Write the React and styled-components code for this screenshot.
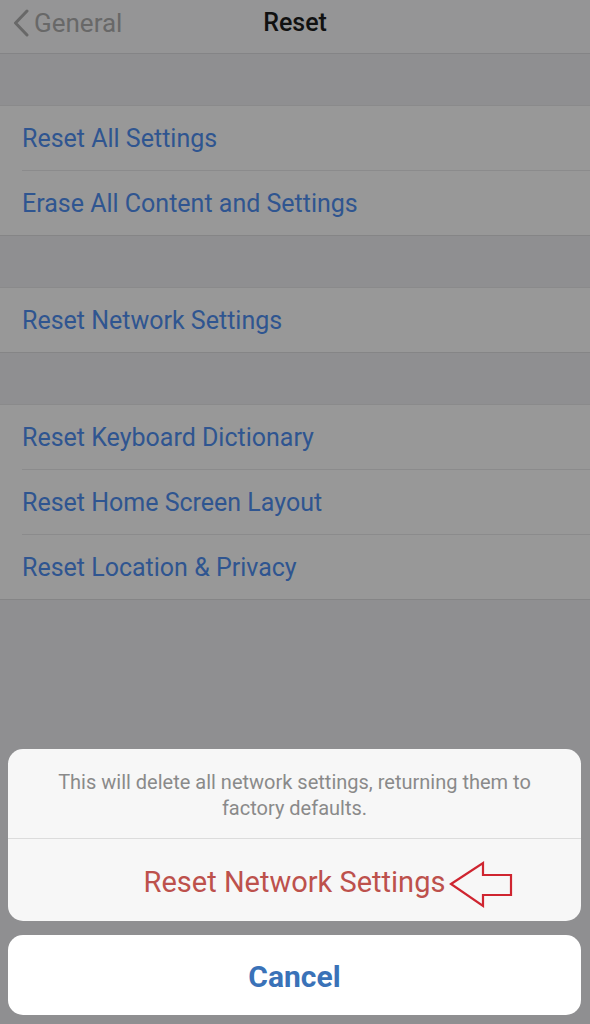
import React from "react";
import styled, { createGlobalStyle } from "styled-components";

const Global = createGlobalStyle`
  html, body { margin: 0; padding: 0; background: #8f8f91; }
  body { font-family: Roboto, "Liberation Sans", Arial, sans-serif; -webkit-font-smoothing: antialiased; }
`;

const Screen = styled.div`
  width: 590px;
  height: 1024px;
  display: flex;
  flex-direction: column;
  background: #8f8f91;
  overflow: hidden;
`;

const NavBar = styled.div`
  height: 53px;
  border-bottom: 1px solid #848486;
  background: #959596;
  display: grid;
  grid-template-columns: 1fr auto 1fr;
  align-items: center;
`;

const Back = styled.div`
  display: flex;
  align-items: center;
  gap: 3px;
  padding-left: 11px;
  color: #686868;
  font-size: 26px;
  margin-top: -8px;
`;

const Title = styled.div`
  font-size: 25px;
  font-weight: 500;
  color: #111;
  margin-top: -9px;
`;

const Group = styled.div`
  margin-top: ${(p) => p.$gap}px;
  background: #989898;
  border-top: 1px solid #8a8a8b;
`;

const Cell = styled.div`
  height: 65px;
  box-sizing: border-box;
  display: flex;
  align-items: center;
  padding-left: 22px;
  position: relative;
  font-size: 25px;
  color: #2f5590;
  &::after {
    content: "";
    position: absolute;
    bottom: 0;
    left: 22px;
    right: 0;
    height: 1px;
    background: #8b8b8c;
  }
  &:last-child::after {
    left: 0;
    background: #858586;
  }
`;

const Sheet = styled.div`
  margin-top: auto;
  padding: 0 9px 9px 8px;
  display: flex;
  flex-direction: column;
  gap: 14px;
`;

const Card = styled.div`
  background: ${(p) => (p.$solid ? "#ffffff" : "#f7f7f7")};
  border-radius: 15px;
  overflow: hidden;
`;

const Message = styled.div`
  height: 90px;
  box-sizing: border-box;
  padding: 20px 26px 0;
  text-align: center;
  font-size: 20px;
  line-height: 26px;
  color: #8a8a8a;
  border-bottom: 1px solid #dcdcdc;
`;

const ActionButton = styled.div`
  height: ${(p) => (p.$bold ? 80 : 82)}px;
  display: flex;
  align-items: center;
  justify-content: center;
  position: relative;
  padding-top: ${(p) => (p.$bold ? 3 : 4)}px;
  box-sizing: border-box;
  font-size: ${(p) => (p.$bold ? 30 : 29)}px;
  font-weight: ${(p) => (p.$bold ? 700 : 400)};
  color: ${(p) => p.$color};
`;

const Arrow = styled.svg`
  position: absolute;
  left: 433px;
  top: 11px;
`;

function Chevron() {
  return (
    <svg width="20" height="28" viewBox="0 0 20 28">
      <path d="M16 2 L4.5 14 L16 26" fill="none" stroke="#686868" strokeWidth="3" strokeLinecap="round" strokeLinejoin="round" />
    </svg>
  );
}

const groups = [
  { gap: 51, items: ["Reset All Settings", "Erase All Content and Settings"] },
  { gap: 51, items: ["Reset Network Settings"] },
  { gap: 51, items: ["Reset Keyboard Dictionary", "Reset Home Screen Layout", "Reset Location & Privacy"] },
];

export default function App() {
  return (
    <>
      <Global />
      <Screen>
        <NavBar>
          <Back>
            <Chevron />
            <span>General</span>
          </Back>
          <Title>Reset</Title>
          <div />
        </NavBar>
        {groups.map((g, i) => (
          <Group key={i} $gap={g.gap}>
            {g.items.map((t) => (
              <Cell key={t}>{t}</Cell>
            ))}
          </Group>
        ))}
        <Sheet>
          <Card>
            <Message>
              This will delete all network settings, returning them to factory defaults.
            </Message>
            <ActionButton $color="#bd514c">
              Reset Network Settings
              <Arrow width="80" height="60" viewBox="0 0 80 60">
                <path d="M10 34 L42 13 L42 25 L70 25 L70 45 L42 45 L42 56 Z" fill="none" stroke="#cf2530" strokeWidth="2.2" strokeLinejoin="miter" />
              </Arrow>
            </ActionButton>
          </Card>
          <Card $solid>
            <ActionButton $bold $color="#3a72b8">Cancel</ActionButton>
          </Card>
        </Sheet>
      </Screen>
    </>
  );
}
